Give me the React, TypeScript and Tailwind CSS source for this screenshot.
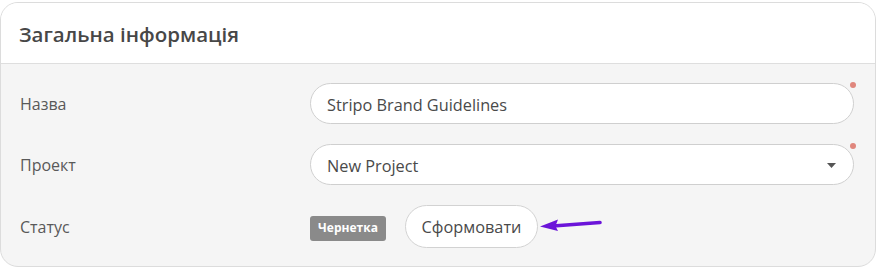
import React from 'react';

const font = { fontFamily: '"Open Sans", "Noto Sans", sans-serif' };

function RequiredDot() {
  return <span className="absolute right-[-2px] top-[-1px] w-[6px] h-[6px] rounded-full bg-[#e0877d]" />;
}

export default function App() {
  return (
    <div className="bg-white w-[877px] h-[268px] pt-[2px]" style={font}>
      <div className="w-[876px] h-[265px] rounded-[18px] border border-[#dcdcdc] bg-[#f5f5f5] overflow-hidden flex flex-col">
        <div className="h-[61px] shrink-0 bg-white border-b border-[#dedede] flex items-center pl-[18px]">
          <h2 className="text-[20.5px] font-semibold text-[#474747] pt-[2px]">Загальна інформація</h2>
        </div>

        <div className="flex flex-col gap-[20px] pt-[19px] pl-[19px] pr-[21px]">
          <div className="flex items-center h-[41px]">
            <label className="w-[290px] text-[16px] text-[#595959] pt-[1px]">Назва</label>
            <div className="relative flex-1">
              <input
                type="text"
                defaultValue="Stripo Brand Guidelines"
                className="w-full h-[41px] rounded-full border border-[#cfcfcf] bg-white px-[16px] pt-[3px] text-[16.3px] text-[#4a4a4a] outline-none"
              />
              <RequiredDot />
            </div>
          </div>

          <div className="flex items-center h-[41px]">
            <label className="w-[290px] text-[16px] text-[#595959] pt-[1px]">Проект</label>
            <div className="relative flex-1">
              <div className="w-full h-[41px] rounded-full border border-[#cfcfcf] bg-white pl-[16px] pr-[17px] flex items-center justify-between">
                <span className="text-[16.3px] text-[#4a4a4a] pt-[3px]">New Project</span>
                <svg width="9" height="5" viewBox="0 0 9 5" className="mt-[2px]">
                  <path d="M0 0 H9 L4.5 5 Z" fill="#555" />
                </svg>
              </div>
              <RequiredDot />
            </div>
          </div>

          <div className="flex items-center h-[43px]">
            <label className="w-[290px] text-[16px] text-[#595959] pt-[1px]">Статус</label>
            <span className="h-[25px] w-[76px] justify-center rounded-[3px] bg-[#8a8a8a] text-white text-[12px] font-bold flex items-center mt-[3px]">Чернетка</span>
            <button className="ml-[19px] h-[43px] w-[133px] rounded-full border border-[#d2d2d2] bg-white pt-[2px] text-[16.3px] text-[#4a4a4a]">
              Сформовати
            </button>
            <svg width="64" height="14" viewBox="0 0 64 14" className="ml-[1px] mt-[-5px]">
              <path d="M14 9 L61 5.5" stroke="#6b14d9" strokeWidth="3.6" strokeLinecap="round" fill="none" />
              <path d="M1 9.5 L19 2.5 L16.5 9 L19 14 Z" fill="#6b14d9" />
            </svg>
          </div>
        </div>
      </div>
    </div>
  );
}
